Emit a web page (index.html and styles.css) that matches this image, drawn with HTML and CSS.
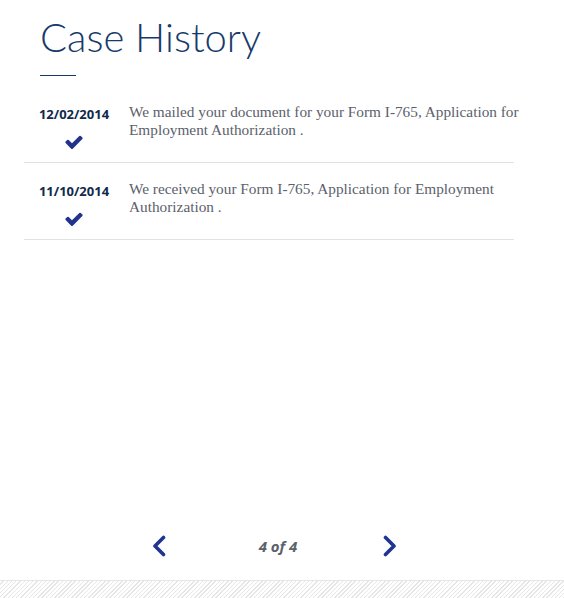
FILE: index.html
```html
<!DOCTYPE html>
<html>
<head>
<meta charset="utf-8">
<link rel="stylesheet" href="styles.css">
</head>
<body>
<div class="page">
  <main class="content">
    <h1 class="title">Case History</h1>
    <div class="title-rule"></div>
    <ul class="history">
      <li class="entry">
        <div class="when">
          <span class="date">12/02/2014</span>
          <svg class="check" viewBox="0 0 1792 1792" width="20" height="20"><path fill="#22338b" d="M1671 566q0 40-28 68l-724 724-136 136q-28 28-68 28t-68-28l-136-136-362-362q-28-28-28-68t28-68l136-136q28-28 68-28t68 28l294 295 656-657q28-28 68-28t68 28l136 136q28 28 28 68z"/></svg>
        </div>
        <p class="desc">We mailed your document for your Form I-765, Application for Employment Authorization .</p>
      </li>
      <li class="entry">
        <div class="when">
          <span class="date">11/10/2014</span>
          <svg class="check" viewBox="0 0 1792 1792" width="20" height="20"><path fill="#22338b" d="M1671 566q0 40-28 68l-724 724-136 136q-28 28-68 28t-68-28l-136-136-362-362q-28-28-28-68t28-68l136-136q28-28 68-28t68 28l294 295 656-657q28-28 68-28t68 28l136 136q28 28 28 68z"/></svg>
        </div>
        <p class="desc">We received your Form I-765, Application for Employment Authorization .</p>
      </li>
    </ul>
  </main>
  <nav class="pager">
    <a class="arrow" href="#" aria-label="Previous"><svg viewBox="0 0 14 22" width="14" height="22"><polyline points="11.5,2.5 3,11 11.5,19.5" fill="none" stroke="#1f3590" stroke-width="3.6" stroke-linecap="round" stroke-linejoin="round"/></svg></a>
    <span class="count">4 of 4</span>
    <a class="arrow" href="#" aria-label="Next"><svg viewBox="0 0 14 22" width="14" height="22"><polyline points="2.5,2.5 11,11 2.5,19.5" fill="none" stroke="#1f3590" stroke-width="3.6" stroke-linecap="round" stroke-linejoin="round"/></svg></a>
  </nav>
  <footer class="hatch"></footer>
</div>
</body>
</html>
```
FILE: styles.css
```css
html, body {
  margin: 0;
  padding: 0;
  background: #fff;
}
.page {
  width: 564px;
  height: 598px;
  display: flex;
  flex-direction: column;
  overflow: hidden;
}
.content {
  flex: 1;
  padding: 0 0 0 24px;
}
.title {
  margin: 13px 0 0 16px;
  font-family: "Lato", "Open Sans", sans-serif;
  font-weight: 300;
  font-size: 40px;
  line-height: 48px;
  color: #163a6b;
}
.title-rule {
  width: 36px;
  height: 1px;
  background: #163a6b;
  margin: 14px 0 0 16px;
}
.history {
  list-style: none;
  margin: 10px 0 0 0;
  padding: 0;
  width: 490px;
}
.entry {
  display: grid;
  grid-template-columns: 100px 1fr;
  column-gap: 5px;
  border-bottom: 1px solid #e2e2e2;
  padding: 19px 0 10px;
}
.when {
  display: flex;
  flex-direction: column;
  align-items: center;
}
.date {
  font-family: "Source Sans Pro", "Open Sans", sans-serif;
  font-weight: 700;
  font-size: 13px;
  line-height: 16px;
  color: #102a4c;
  margin-top: 1px;
}
.check {
  margin-top: 10px;
}
.desc {
  margin: -2px -10px 0 0;
  font-family: "Liberation Serif", Georgia, serif;
  font-size: 15.3px;
  line-height: 18px;
  color: #5b616b;
}
.pager {
  height: 40px;
  margin-bottom: 14px;
  display: flex;
  align-items: center;
  padding-left: 152px;
}
.arrow {
  display: flex;
  width: 14px;
  height: 22px;
}
.count {
  width: 217px;
  box-sizing: border-box;
  padding-left: 7px;
  text-align: center;
  font-family: "Open Sans", sans-serif;
  font-weight: 700;
  font-style: italic;
  font-size: 15px;
  color: #5b616b;
}
.hatch {
  height: 17px;
  border-top: 1px solid #e6e6e6;
  background: repeating-linear-gradient(135deg, #fff 0 2px, #e6e6e6 2px 3px);
}
```
